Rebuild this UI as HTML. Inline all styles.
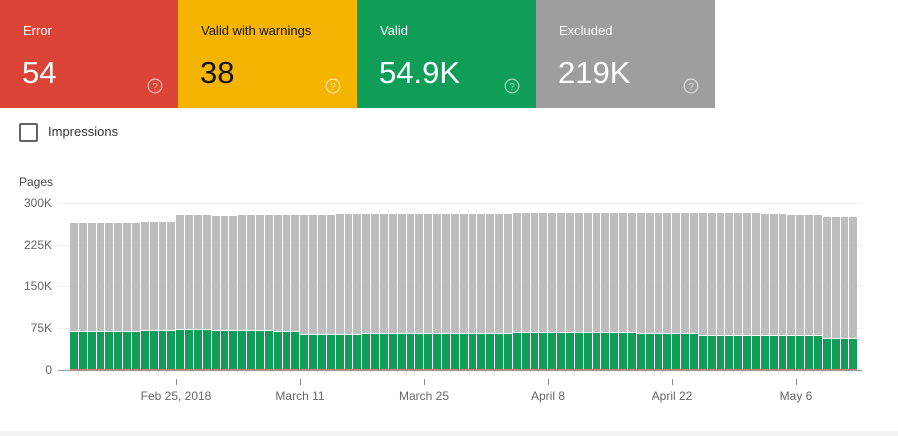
<!DOCTYPE html>
<html><head><meta charset="utf-8"><style>
*{margin:0;padding:0;box-sizing:border-box}
body{width:898px;height:436px;background:#fff;font-family:"Liberation Sans",sans-serif;position:relative;overflow:hidden}
.card{position:absolute;top:0;height:108px;width:179px;color:#fff}
.card .l{position:absolute;left:23px;top:23px;font-size:13px}
.card .n{position:absolute;left:22px;top:55px;font-size:31px}
.card svg{position:absolute;left:147px;top:78px}
.a{position:absolute}
.yl{position:absolute;right:846px;font-size:12px;color:#666;text-align:right}
.gl{position:absolute;left:58px;width:804px;height:1px;background:#eee}
.xl{position:absolute;top:389px;font-size:12px;color:#666;transform:translateX(-50%);white-space:nowrap}
.tk{position:absolute;top:379px;width:1px;height:6px;background:#888}
.bar{position:absolute}
</style></head><body>
<div class="card" style="left:0;background:#db4437"><div class="l">Error</div><div class="n">54</div><svg width="16" height="16" viewBox="0 0 16 16"><circle cx="8" cy="8" r="6.8" fill="none" stroke="rgba(255,255,255,.6)" stroke-width="1.3"/><text x="8" y="12" font-size="10" text-anchor="middle" fill="rgba(255,255,255,.6)" font-family="Liberation Sans">?</text></svg></div>
<div class="card" style="left:178px;background:#f4b400;color:#111"><div class="l">Valid with warnings</div><div class="n">38</div><svg width="16" height="16" viewBox="0 0 16 16"><circle cx="8" cy="8" r="6.8" fill="none" stroke="rgba(255,255,255,.6)" stroke-width="1.3"/><text x="8" y="12" font-size="10" text-anchor="middle" fill="rgba(255,255,255,.6)" font-family="Liberation Sans">?</text></svg></div>
<div class="card" style="left:357px;background:#0f9d58"><div class="l">Valid</div><div class="n">54.9K</div><svg width="16" height="16" viewBox="0 0 16 16"><circle cx="8" cy="8" r="6.8" fill="none" stroke="rgba(255,255,255,.6)" stroke-width="1.3"/><text x="8" y="12" font-size="10" text-anchor="middle" fill="rgba(255,255,255,.6)" font-family="Liberation Sans">?</text></svg></div>
<div class="card" style="left:536px;background:#9e9e9e"><div class="l">Excluded</div><div class="n">219K</div><svg width="16" height="16" viewBox="0 0 16 16"><circle cx="8" cy="8" r="6.8" fill="none" stroke="rgba(255,255,255,.6)" stroke-width="1.3"/><text x="8" y="12" font-size="10" text-anchor="middle" fill="rgba(255,255,255,.6)" font-family="Liberation Sans">?</text></svg></div>

<div class="a" style="left:19px;top:123px;width:19px;height:19px;border:2px solid #5f6368;border-radius:2px"></div>
<div class="a" style="left:48px;top:124px;font-size:13px;color:#333">Impressions</div>
<div class="a" style="left:19px;top:175px;font-size:12px;color:#444">Pages</div>

<div class="yl" style="top:196px">300K</div>
<div class="yl" style="top:238px">225K</div>
<div class="yl" style="top:279px">150K</div>
<div class="yl" style="top:321px">75K</div>
<div class="yl" style="top:363px">0</div>
<div class="gl" style="top:203px"></div>
<div class="gl" style="top:245px"></div>
<div class="gl" style="top:286px"></div>
<div class="gl" style="top:328px"></div>
<div id="bars"></div>
<div class="a" style="left:58px;top:370px;width:804px;height:1px;background:#999"></div>
<div class="a" style="left:70px;top:369px;width:787px;height:1px;background:#e57368"></div>

<div class="tk" style="left:176px"></div><div class="xl" style="left:176px">Feb 25, 2018</div>
<div class="tk" style="left:300px"></div><div class="xl" style="left:300px">March 11</div>
<div class="tk" style="left:424px"></div><div class="xl" style="left:424px">March 25</div>
<div class="tk" style="left:548px"></div><div class="xl" style="left:548px">April 8</div>
<div class="tk" style="left:672px"></div><div class="xl" style="left:672px">April 22</div>
<div class="tk" style="left:796px"></div><div class="xl" style="left:796px">May 6</div>
<div class="a" style="left:0;top:431px;width:898px;height:5px;background:#f3f3f3"></div>
<script>
var h='';
function gt(i){if(i<8)return 223;if(i<12)return 222;if(i<16)return 215;if(i<19)return 216;if(i<30)return 215;if(i<50)return 214;if(i<78)return 213;if(i<81)return 214;if(i<85)return 215;return 217;}
function ge(i){if(i<8)return 332;if(i<12)return 331;if(i<16)return 330;if(i<23)return 331;if(i<26)return 332;if(i<33)return 335;if(i<50)return 334;if(i<64)return 333;if(i<71)return 334;if(i<85)return 336;return 339;}
for(var i=0;i<89;i++){var x=Math.round(70+i*8.857);var nx=Math.round(70+(i+1)*8.857);var w=nx-x-1;var g=gt(i),e=ge(i);
h+='<div class="bar" style="left:'+x+'px;width:'+w+'px;top:'+g+'px;height:'+(e-g-1)+'px;background:#bdbdbd"></div>';
h+='<div class="bar" style="left:'+x+'px;width:'+w+'px;top:'+e+'px;height:'+(369-e)+'px;background:#0f9d58"></div>';}
document.getElementById('bars').innerHTML=h;
</script>
</body></html>
